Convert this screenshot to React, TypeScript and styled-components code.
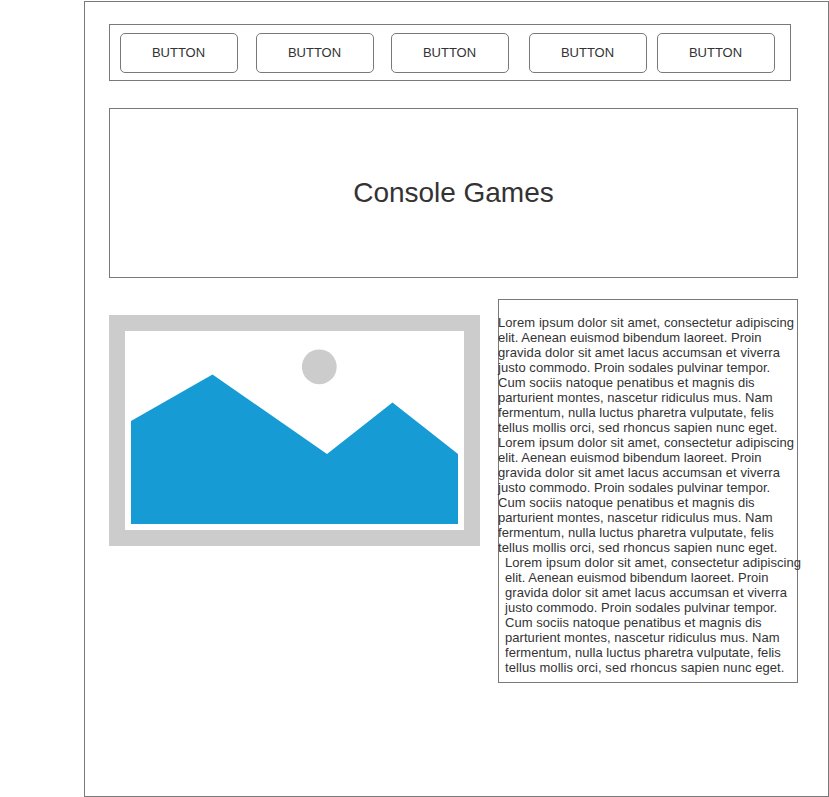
import React from 'react';
import styled, { createGlobalStyle } from 'styled-components';

const GlobalStyle = createGlobalStyle`
  * { box-sizing: border-box; }
  body { margin: 0; background: #fff; font-family: 'Liberation Sans', Arial, sans-serif; color: #333; }
`;

const Page = styled.main`
  width: 745px;
  height: 796px;
  margin: 1px 0 0 84px;
  border: 1px solid #797979;
  padding: 22px 0 0 24px;
  overflow: hidden;
`;

const Toolbar = styled.nav`
  display: flex;
  width: 682px;
  height: 57px;
  border: 1px solid #797979;
  padding: 8px 0 0 10px;
`;

const NavButton = styled.button<{ $gap?: number }>`
  flex: none;
  width: 118px;
  height: 40px;
  margin: 0 ${({ $gap = 0 }) => $gap}px 0 0;
  padding: 0 1px 1px 0;
  border: 1px solid #797979;
  border-radius: 5px;
  background: #fff;
  color: #333;
  font: 13px 'Liberation Sans', Arial, sans-serif;
`;

const Banner = styled.header`
  display: flex;
  align-items: center;
  justify-content: center;
  width: 689px;
  height: 170px;
  margin-top: 27px;
  border: 1px solid #797979;
`;

const Title = styled.h1`
  margin: 0;
  font-size: 28px;
  font-weight: 400;
  line-height: 32px;
  letter-spacing: -0.03px;
`;

const Content = styled.section`
  display: flex;
  align-items: flex-start;
  margin-top: 21px;
`;

const Picture = styled.svg`
  flex: none;
  display: block;
  width: 371px;
  height: 231px;
  margin: 16px 18px 0 0;
`;

const Article = styled.article`
  width: 300px;
  height: 384px;
  border: 1px solid #797979;
  padding-top: 15px;
`;

const Paragraph = styled.p<{ $indent?: number }>`
  margin: 0 0 0 ${({ $indent = -1 }) => $indent}px;
  font-size: 13px;
  line-height: 15px;
  white-space: nowrap;
`;

const Line = styled.span<{ $tracking: number }>`
  display: block;
  letter-spacing: ${({ $tracking }) => $tracking}px;
`;

const gaps = [18, 17, 20, 10, 0];

const lorem: { text: string; tracking: number }[] = [
  { text: 'Lorem ipsum dolor sit amet, consectetur adipiscing', tracking: 0.07 },
  { text: 'elit. Aenean euismod bibendum laoreet. Proin', tracking: 0.025 },
  { text: 'gravida dolor sit amet lacus accumsan et viverra', tracking: 0.08 },
  { text: 'justo commodo. Proin sodales pulvinar tempor.', tracking: 0.045 },
  { text: 'Cum sociis natoque penatibus et magnis dis', tracking: 0.055 },
  { text: 'parturient montes, nascetur ridiculus mus. Nam', tracking: 0.05 },
  { text: 'fermentum, nulla luctus pharetra vulputate, felis', tracking: 0.055 },
  { text: 'tellus mollis orci, sed rhoncus sapien nunc eget.', tracking: 0.07 },
];

const Lorem = ({ indent }: { indent?: number }) => (
  <Paragraph $indent={indent}>
    {lorem.map(({ text, tracking }) => (
      <Line key={text} $tracking={tracking}>{text}</Line>
    ))}
  </Paragraph>
);

export default function App() {
  return (
    <>
      <GlobalStyle />
      <Page>
        <Toolbar>
          {gaps.map((gap, i) => (
            <NavButton key={i} $gap={gap}>BUTTON</NavButton>
          ))}
        </Toolbar>
        <Banner>
          <Title>Console Games</Title>
        </Banner>
        <Content>
          <Picture viewBox="0 0 371 231" aria-label="Image placeholder">
            <rect width="371" height="231" fill="#ccc" />
            <rect x="16" y="16" width="339" height="199" fill="#fff" />
            <circle cx="210.3" cy="51.8" r="17.4" fill="#ccc" />
            <path d="M22 106L103.5 59.5L218 139L283.5 87.5L349 139V209H22Z" fill="#169bd5" />
          </Picture>
          <Article>
            <Lorem />
            <Lorem />
            <Lorem indent={6} />
          </Article>
        </Content>
      </Page>
    </>
  );
}
